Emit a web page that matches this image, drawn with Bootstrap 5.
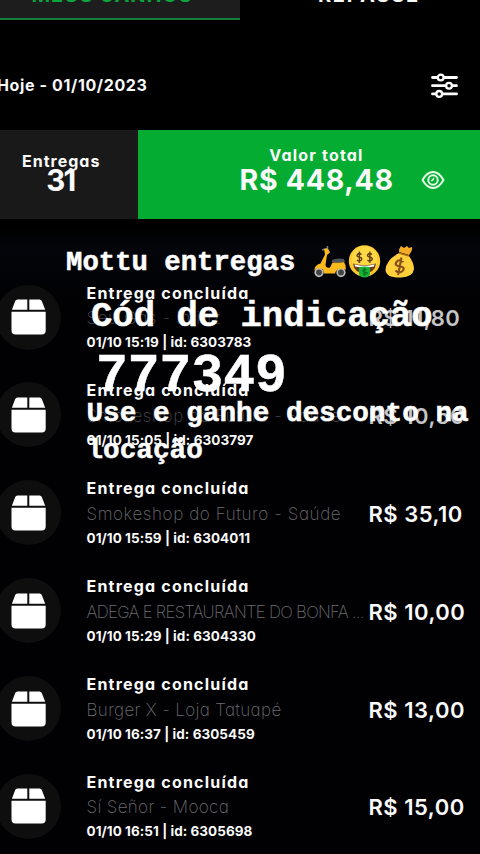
<!DOCTYPE html>
<html lang="pt-BR" data-bs-theme="dark">
<head>
<meta charset="utf-8">
<meta name="viewport" content="width=device-width, initial-scale=1">
<title>Meus ganhos</title>
<link href="https://cdn.jsdelivr.net/npm/bootstrap@5.3.0/dist/css/bootstrap.min.css" rel="stylesheet">
<style>
body{width:480px;height:854px;background:#000;color:#fafafa;font-family:"Inter",sans-serif;font-feature-settings:"cv11","calt" 0;white-space:nowrap}
.screen{height:854px;background:linear-gradient(#000 0 225px,#03050a 250px,#010103 300px,#010103)}
.tabs{height:19.5px}
.tab{height:19.5px;font-weight:700;font-size:20px;line-height:24px}
.tab span{margin-top:-17.5px}
.tab-on{background:#1d1d1d;color:#08a53c;border-bottom:2px solid #12803a!important}
.tab-a{letter-spacing:.9px}.tab-a span{margin-left:-16px}
.tab-b{letter-spacing:1.8px}.tab-b span{margin-left:18px}
.datebar{height:110.5px;padding:0 22.5px 0 0}
.day{font-size:16px;font-weight:700;letter-spacing:.63px;margin:-4px 0 0 -3px}
.datebar svg{margin-top:-3px}
.totals{height:89px}
.count{width:137.5px;background:#191919}
.sum{background:#04ad32}
.lbl{font-size:16px;font-weight:700;line-height:20px}
.lbl-a{letter-spacing:1px;margin:21px 15px 0 0}
.num-a{font-size:29.5px;font-weight:700;line-height:30px;letter-spacing:-2px;margin:-6px 17px 0 0}
.sumcol{margin-left:102px;width:154px}
.lbl-b{letter-spacing:1.2px;margin-top:15px}
.num-b{font-size:28.5px;font-weight:700;line-height:30px;letter-spacing:.7px}
.eye{margin:40px 0 0 27px}
.rows{padding-top:48.5px}
.job{height:97.9px}
.disc{width:65px;height:65px;margin-left:-4px;border-radius:50%;background:#0e0e0f;position:relative;top:1px}
.info{width:279px;margin-left:25.5px;padding-top:13px}
.t1{font-size:16px;font-weight:700;line-height:24px;letter-spacing:1.2px}
.t2{font-size:17px;font-weight:200;line-height:25px;color:#6d6d71;letter-spacing:.6px;padding-top:1.5px}
.under{color:#48484b}
.caps{letter-spacing:-.7px;font-size:16.7px}
.snug{letter-spacing:.35px}
.t3{font-size:13.5px;font-weight:700;line-height:24px;letter-spacing:.05px;margin-top:-1px}
.amt{font-size:22px;font-weight:600;letter-spacing:.5px;margin-left:3px;margin-top:18.5px}
.dim{color:#c5c5c7}
.note{top:0;left:0;width:480px;font-family:"Liberation Mono",monospace;font-weight:700;color:#fff;-webkit-text-stroke:.5px #fff}
.n1{font-size:27.3px;line-height:32px;margin:245px 0 0 66px}
.n1 span{padding-top:1.5px}
.n1 svg{margin-left:18px}
.n2{font-size:35.6px;line-height:40px;margin:17.5px 0 0 91px}
.n3{font-size:53px;line-height:54px;margin:13px 0 0 96px}
.n4{font-size:27.7px;line-height:37.5px;margin:-9px 0 0 86.5px}
</style>
<script src="https://cdn.jsdelivr.net/npm/bootstrap@5.3.0/dist/js/bootstrap.bundle.min.js"></script>
</head>
<body class="m-0 overflow-hidden">
<svg class="d-none">
<symbol id="box" viewBox="0 0 36 36"><path fill="#fff" d="M6.500.5H16.300V10.700H.9L4.200 2Q4.800.5 6.500.5ZM18.300.5H28.600Q30.200.5 30.800 2L34.200 10.700H18.300ZM.5 12.700H34.700V31.500Q34.700 35.500 30.700 35.500H4.500Q.5 35.500.5 31.500Z"/></symbol>
</svg>
<main class="screen position-relative overflow-hidden">
<nav class="tabs d-flex overflow-hidden">
<div class="tab tab-on tab-a w-50 d-flex justify-content-center overflow-hidden"><span>MEUS GANHOS</span></div>
<div class="tab tab-b w-50 d-flex justify-content-center overflow-hidden"><span>REPASSE</span></div>
</nav>
<header class="datebar d-flex align-items-center justify-content-between pt-4">
<div class="day">Hoje - 01/10/2023</div>
<svg width="27" height="25" viewBox="0 0 27 25" fill="#000" stroke="#fff" stroke-width="2.300"><path stroke-width="2.800" stroke-linecap="round" d="M1.500 4.500H25.500M1.500 12.700H25.500M1.500 20.900H25.500"/><circle cx="9.700" cy="4.500" r="2.900"/><circle cx="18" cy="12.700" r="2.900"/><circle cx="8.200" cy="20.900" r="2.900"/></svg>
</header>
<section class="totals d-flex">
<div class="count d-flex flex-column align-items-center"><div class="lbl lbl-a">Entregas</div><div class="num-a">31</div></div>
<div class="sum flex-grow-1 d-flex"><div class="sumcol text-center"><div class="lbl lbl-b">Valor total</div><div class="num-b">R$ 448,48</div></div>
<svg class="eye" width="24" height="20" viewBox="0 0 24 20" fill="none" stroke="#e6ffe9" stroke-width="1.900"><path d="M1.500 10Q6 2 12 2T22.500 10Q18 18 12 18T1.500 10Z"/><circle cx="12" cy="10" r="4.700"/><path d="M10 10.500A2.200 2.200 0 0 0 12.500 7.700" stroke-width="1.500"/></svg></div>
</section>
<section class="rows">
<div class="job d-flex align-items-start"><div class="disc d-flex align-items-center justify-content-center flex-shrink-0 mt-3"><svg width="36" height="36"><use href="#box"/></svg></div><div class="info flex-shrink-0"><div class="t1">Entrega concluída</div><div class="t2 under">Seu Gás - Imiriz</div><div class="t3">01/10 15:19 | id: 6303783</div></div><div class="amt dim pt-3">R$ 11,80</div></div>
<div class="job d-flex align-items-start"><div class="disc d-flex align-items-center justify-content-center flex-shrink-0 mt-3"><svg width="36" height="36"><use href="#box"/></svg></div><div class="info flex-shrink-0"><div class="t1">Entrega concluída</div><div class="t2 under">Smokeshop do Futuro - Saúde</div><div class="t3">01/10 15:05 | id: 6303797</div></div><div class="amt dim pt-3">R$ 10,50</div></div>
<div class="job d-flex align-items-start"><div class="disc d-flex align-items-center justify-content-center flex-shrink-0 mt-3"><svg width="36" height="36"><use href="#box"/></svg></div><div class="info flex-shrink-0"><div class="t1">Entrega concluída</div><div class="t2">Smokeshop do Futuro - Saúde</div><div class="t3">01/10 15:59 | id: 6304011</div></div><div class="amt pt-3">R$ 35,10</div></div>
<div class="job d-flex align-items-start"><div class="disc d-flex align-items-center justify-content-center flex-shrink-0 mt-3"><svg width="36" height="36"><use href="#box"/></svg></div><div class="info flex-shrink-0"><div class="t1">Entrega concluída</div><div class="t2 caps">ADEGA E RESTAURANTE DO BONFA ...</div><div class="t3">01/10 15:29 | id: 6304330</div></div><div class="amt pt-3">R$ 10,00</div></div>
<div class="job d-flex align-items-start"><div class="disc d-flex align-items-center justify-content-center flex-shrink-0 mt-3"><svg width="36" height="36"><use href="#box"/></svg></div><div class="info flex-shrink-0"><div class="t1">Entrega concluída</div><div class="t2 snug">Burger X - Loja Tatuapé</div><div class="t3">01/10 16:37 | id: 6305459</div></div><div class="amt pt-3">R$ 13,00</div></div>
<div class="job d-flex align-items-start"><div class="disc d-flex align-items-center justify-content-center flex-shrink-0 mt-3"><svg width="36" height="36"><use href="#box"/></svg></div><div class="info flex-shrink-0"><div class="t1">Entrega concluída</div><div class="t2 snug">Sí Señor - Mooca</div><div class="t3">01/10 16:51 | id: 6305698</div></div><div class="amt pt-3">R$ 15,00</div></div>
</section>
<aside class="note position-absolute">
<div class="n1 d-flex"><span>Mottu entregas</span>
<svg width="104" height="34" viewBox="0 0 104 34">
<g><circle cx="6" cy="27.500" r="3.800" fill="#444" stroke="#bbb" stroke-width="1.700"/><circle cx="28" cy="27.500" r="3.800" fill="#444" stroke="#bbb" stroke-width="1.700"/><path d="M9 5 15 3M14.500 3V1" stroke="#777" stroke-width="1.500"/><path fill="#fbb91b" d="M11 4 15 3.500 17 7.500 14 10 12.500 20Q13 23.500 17 22.500L19.500 17.500 31 17Q33.500 21 32.500 25 27 21.500 23 26L22 28.500H11L10 24.500Q5 21.500 1.500 25.500 1 20.500 7.500 18.500L12 9.500Z"/><path fill="#50545b" d="M19 15Q24 12.500 31 14L32 17Q25 18.500 19 17Z"/></g>
<g><circle cx="51.500" cy="16" r="15.700" fill="#fdc92e"/><circle cx="51.500" cy="14" r="13" fill="#ffd844"/><path fill="#6b3b12" d="M40 18.500Q51.500 22 63 18.500 62 28 51.500 28T40 18.500Z"/><path fill="#fff" d="M41.500 19.300Q51.500 22.300 61.500 19.300L61 21.500Q51.500 23.500 42 21.500Z"/><path fill="#17b338" d="M46 22.500Q51.500 20.500 57 22.500V29Q56 32.500 51.500 32.500T46 29Z"/><g fill="none" stroke="#5c3b16" stroke-width="1.400"><path d="M48.500 9.500Q46 7.500 44.500 9.500T46.500 12.300 48 15.300Q46 17 44 15M46.400 6.500V18M59 9.500Q56.500 7.500 55 9.500T57 12.300 58.500 15.300Q56.500 17 54.500 15M56.900 6.500V18"/><path stroke="#087a23" d="M53.500 25Q51 23.500 50 25.300T53 27.500 50 29.500M51.500 23V31"/></g></g>
<g><path fill="#f5ad25" d="M86 7Q86 3 88 1L91 3 94 1 96 3 99 2Q100 5 96 10Z"/><path fill="#ffd03b" d="M86 8 96 11Q101 18 101 24 100 32 88 32.500 73 33 72.500 25 73 15 86 8Z"/><path stroke="#a86c13" stroke-width="1.500" d="M86 8 96 11"/><path fill="none" stroke="#875018" stroke-width="2.200" d="M90.500 17Q86 13.500 83.500 17T87 21.500 89.500 26Q86 29 82.500 25.500M88.500 12.500 85 30"/></g>
</svg></div>
<div class="n2">Cód de indicação</div>
<div class="n3">777349</div>
<div class="n4">Use e ganhe desconto na<br>locação</div>
</aside>
</main>
</body>
</html>
